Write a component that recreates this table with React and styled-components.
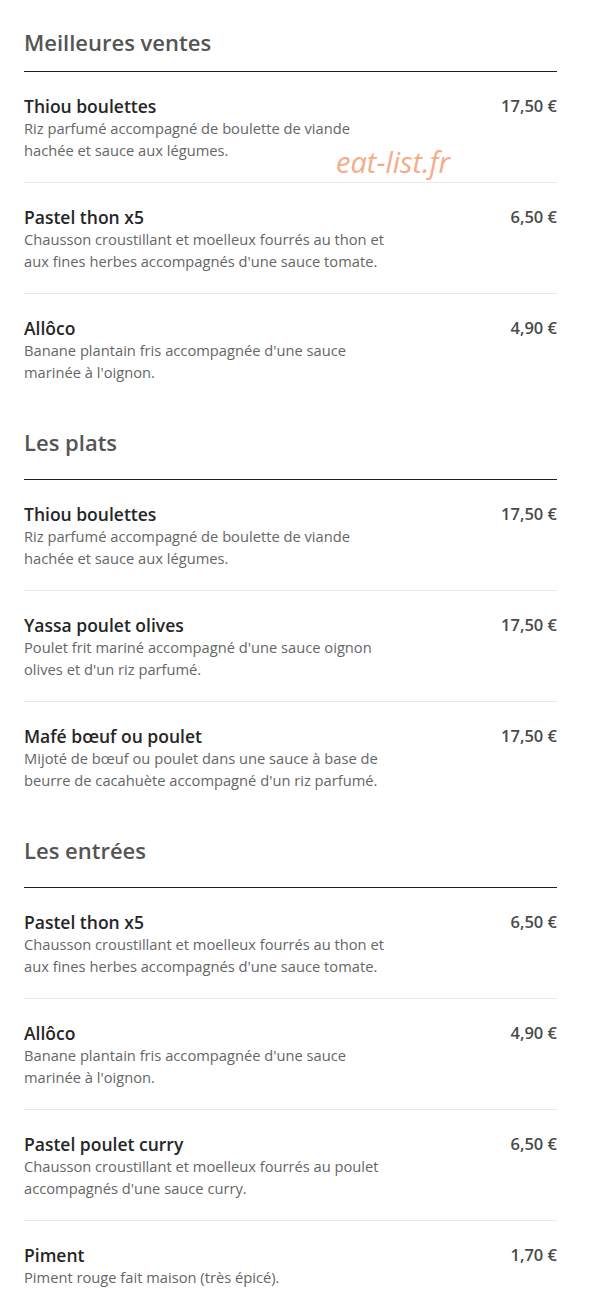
import React from 'react';
import styled, { createGlobalStyle } from 'styled-components';

const sections = [
  {
    title: 'Meilleures ventes',
    items: [
      { name: 'Thiou boulettes', price: '17,50 €', desc: 'Riz parfumé accompagné de boulette de viande hachée et sauce aux légumes.' },
      { name: 'Pastel thon x5', price: '6,50 €', desc: "Chausson croustillant et moelleux fourrés au thon et aux fines herbes accompagnés d'une sauce tomate." },
      { name: 'Allôco', price: '4,90 €', desc: "Banane plantain fris accompagnée d'une sauce marinée à l'oignon." },
    ],
  },
  {
    title: 'Les plats',
    items: [
      { name: 'Thiou boulettes', price: '17,50 €', desc: 'Riz parfumé accompagné de boulette de viande hachée et sauce aux légumes.' },
      { name: 'Yassa poulet olives', price: '17,50 €', desc: "Poulet frit mariné accompagné d'une sauce oignon olives et d'un riz parfumé." },
      { name: 'Mafé bœuf ou poulet', price: '17,50 €', desc: "Mijoté de bœuf ou poulet dans une sauce à base de beurre de cacahuète accompagné d'un riz parfumé." },
    ],
  },
  {
    title: 'Les entrées',
    items: [
      { name: 'Pastel thon x5', price: '6,50 €', desc: "Chausson croustillant et moelleux fourrés au thon et aux fines herbes accompagnés d'une sauce tomate." },
      { name: 'Allôco', price: '4,90 €', desc: "Banane plantain fris accompagnée d'une sauce marinée à l'oignon." },
      { name: 'Pastel poulet curry', price: '6,50 €', desc: "Chausson croustillant et moelleux fourrés au poulet accompagnés d'une sauce curry." },
      { name: 'Piment', price: '1,70 €', desc: 'Piment rouge fait maison (très épicé).' },
    ],
  },
];

function App() {
  return (
    <>
      <GlobalStyle />
      <Page>
        {sections.map((section, s) => (
          <Section key={section.title}>
            <SectionTitle $first={s === 0}>{section.title}</SectionTitle>
            {section.items.map((item, i) => (
              <Item key={i}>
                <ItemText>
                  <ItemName>{item.name}</ItemName>
                  <ItemDesc>{item.desc}</ItemDesc>
                </ItemText>
                <Price>{item.price}</Price>
              </Item>
            ))}
          </Section>
        ))}
        <Watermark>eat-list.fr</Watermark>
      </Page>
    </>
  );
}

export default App;

const GlobalStyle = createGlobalStyle`
  html, body {
    margin: 0;
    padding: 0;
    background: #fff;
  }
  body {
    font-family: 'Open Sans', 'Liberation Sans', sans-serif;
  }
`;

const Page = styled.div`
  position: relative;
  width: 533px;
  margin-left: 24px;
  padding-top: 4px;
`;

const Section = styled.section`
  display: flex;
  flex-direction: column;
`;

const SectionTitle = styled.h2`
  margin: 0;
  padding: 23px 0 ${(p) => (p.$first ? '14px' : '22px')};
  font-size: 22px;
  line-height: 30px;
  font-weight: 600;
  color: #555;
  border-bottom: 1px solid #1e1e1e;
`;

const Item = styled.div`
  display: flex;
  justify-content: space-between;
  align-items: flex-start;
  padding: 23px 0 21px;
  border-bottom: 1px solid #e9e9e9;
  &:last-child {
    border-bottom: none;
  }
`;

const ItemText = styled.div`
  display: flex;
  flex-direction: column;
`;

const ItemName = styled.div`
  font-size: 17.5px;
  line-height: 22px;
  font-weight: 600;
  color: #262626;
`;

const ItemDesc = styled.div`
  max-width: 368px;
  font-size: 14.7px;
  line-height: 22px;
  color: #666;
`;

const Price = styled.div`
  font-size: 16.5px;
  line-height: 22px;
  font-weight: 600;
  color: #4a4a4a;
  white-space: nowrap;
`;

const Watermark = styled.div`
  position: absolute;
  left: 312px;
  top: 142px;
  font-size: 29px;
  font-style: italic;
  color: #f4a47c;
  opacity: 0.9;
`;
